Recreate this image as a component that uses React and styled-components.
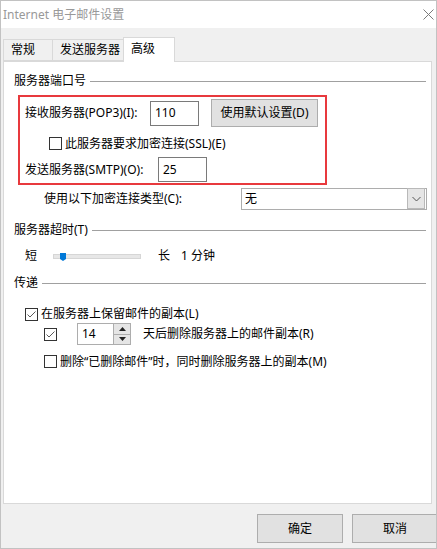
import React from 'react'
import styled, { createGlobalStyle } from 'styled-components'

const GlobalStyle = createGlobalStyle`
  html, body { margin: 0; padding: 0; background: #fff; }
  body {
    font-family: "Noto Sans", "Noto Sans CJK SC", sans-serif;
    font-size: 12px;
    color: #000;
  }
`

const Window = styled.div`
  width: 437px;
  height: 549px;
  box-sizing: border-box;
  border: 1px solid #c2c2c2;
  display: flex;
  flex-direction: column;
  overflow: hidden;
  background: #f0f0f0;
`

const TitleBar = styled.div`
  height: 27px;
  flex: none;
  background: #fff;
  display: flex;
  align-items: center;
  justify-content: space-between;
  padding: 0 2px 0 2px;
  color: #999;
  line-height: 18px;
`

const CloseIcon = () => (
  <svg width="11" height="11" viewBox="0 0 11 11">
    <path d="M0.5 0.5 L10.5 10.5 M10.5 0.5 L0.5 10.5" stroke="#7a7a7a" strokeWidth="1" fill="none" />
  </svg>
)

const Body = styled.div`
  flex: 1;
  display: flex;
  flex-direction: column;
  padding: 9px 4px 0 1px;
`

const TabStrip = styled.div`
  display: flex;
  align-items: flex-end;
  height: 24px;
  padding-left: 1px;
`

const Tab = styled.div`
  box-sizing: border-box;
  width: ${p => p.$w}px;
  height: ${p => (p.$active ? 25 : 22)}px;
  margin-bottom: ${p => (p.$active ? -1 : 0)}px;
  margin-right: -1px;
  padding-left: 7px;
  display: flex;
  align-items: center;
  border: 1px solid #d9d9d9;
  border-bottom: ${p => (p.$active ? 'none' : '1px solid #d9d9d9')};
  background: ${p => (p.$active ? '#fff' : '#f0f0f0')};
  position: relative;
  z-index: ${p => (p.$active ? 1 : 0)};
  line-height: 18px;
  padding-bottom: ${p => (p.$active ? 2 : 0)}px;
`

const Panel = styled.div`
  box-sizing: border-box;
  height: 443px;
  margin-left: 1px;
  border: 1px solid #d9d9d9;
  background: #fff;
  padding: 10px 4px 0 10px;
  display: flex;
  flex-direction: column;
`

const GroupHeader = styled.div`
  display: flex;
  align-items: center;
  height: 18px;
  line-height: 18px;
  margin-top: ${p => p.$top || 0}px;
  gap: 4px;
  &::after {
    content: '';
    flex: 1;
    height: 1px;
    background: #a0a0a0;
    margin-right: 1px;
  }
`

const Highlight = styled.div`
  box-sizing: border-box;
  width: 309px;
  height: 90px;
  margin: 5px 0 0 4px;
  border: 2px solid #e8393d;
  padding: 2px 0 1px 5px;
  display: flex;
  flex-direction: column;
`

const Row = styled.div`
  display: flex;
  align-items: center;
  height: ${p => p.$h || 18}px;
  margin-top: ${p => p.$top || 0}px;
  padding-left: ${p => p.$indent || 0}px;
  line-height: 18px;
  white-space: nowrap;
`

const Label = styled.span`
  width: ${p => p.$w}px;
  flex: none;
`

const TextBox = styled.div`
  box-sizing: border-box;
  width: ${p => p.$w}px;
  height: 25px;
  border: 1px solid #7a7a7a;
  padding-left: 4px;
  display: flex;
  align-items: center;
  line-height: 18px;
`

const Button = styled.div`
  box-sizing: border-box;
  width: ${p => p.$w}px;
  height: ${p => p.$h}px;
  margin-left: ${p => p.$left || 0}px;
  flex: none;
  background: #e1e1e1;
  border: 1px solid #adadad;
  display: flex;
  align-items: center;
  justify-content: center;
  line-height: 18px;
`

const Box = styled.span`
  box-sizing: border-box;
  width: 13px;
  height: 13px;
  flex: none;
  border: 1px solid #333;
  background: #fff;
  margin-right: ${p => p.$gap ?? 3}px;
  display: flex;
  align-items: center;
  justify-content: center;
`

const Check = ({ checked, gap }) => (
  <Box $gap={gap}>
    {checked && (
      <svg width="11" height="11" viewBox="0 0 11 11">
        <path d="M1.5 5.5 L4 8 L9.5 2.5" stroke="#5a5a5a" strokeWidth="1" fill="none" />
      </svg>
    )}
  </Box>
)

const Select = styled.div`
  box-sizing: border-box;
  width: 186px;
  height: 22px;
  border: 1px solid #adadad;
  display: flex;
  align-items: stretch;
  padding-left: 3px;
  line-height: 18px;
`

const SelectValue = styled.span`
  flex: 1;
  display: flex;
  align-items: center;
`

const DropButton = styled.span`
  box-sizing: border-box;
  width: 18px;
  margin: -1px 1px 0 0;
  background: #e6e6e6;
  border: 1px solid #b9b9b9;
  display: flex;
  align-items: center;
  justify-content: center;
`

const Chevron = () => (
  <svg width="9" height="6" viewBox="0 0 9 6">
    <path d="M0.5 1 L4.5 5 L8.5 1" stroke="#555" strokeWidth="1" fill="none" />
  </svg>
)

const Track = styled.div`
  box-sizing: border-box;
  position: relative;
  width: 88px;
  height: 5px;
  margin: 0 17px 0 16px;
  background: #e7e7e7;
  border: 1px solid #d6d6d6;
`

const Thumb = styled.svg`
  position: absolute;
  left: 6px;
  top: -2px;
`

const Spin = styled.div`
  box-sizing: border-box;
  width: 54px;
  height: 22px;
  margin: 0 12px 0 20px;
  border: 1px solid #adadad;
  display: flex;
  align-items: stretch;
`

const SpinValue = styled.span`
  flex: 1;
  padding-left: 4px;
  display: flex;
  align-items: center;
`

const SpinButtons = styled.span`
  width: 16px;
  display: flex;
  flex-direction: column;
  border-left: 1px solid #adadad;
`

const SpinHalf = styled.span`
  flex: 1;
  background: #e5e5e5;
  display: flex;
  align-items: center;
  justify-content: center;
  & + & { border-top: 1px solid #adadad; }
`

const Arrow = ({ up }) => (
  <svg width="7" height="4" viewBox="0 0 7 4">
    <path d={up ? 'M0 4 L3.5 0 L7 4 Z' : 'M0 0 L3.5 4 L7 0 Z'} fill="#222" />
  </svg>
)

const Footer = styled.div`
  display: flex;
  justify-content: flex-end;
  gap: 9px;
  padding-top: 10px;
  margin-right: -6px;
`

export default function App() {
  return (
    <>
      <GlobalStyle />
      <Window>
        <TitleBar>
          <span>Internet 电子邮件设置</span>
          <CloseIcon />
        </TitleBar>
        <Body>
          <TabStrip>
            <Tab $w={50}>常规</Tab>
            <Tab $w={72}>发送服务器</Tab>
            <Tab $w={52} $active>高级</Tab>
          </TabStrip>
          <Panel>
            <GroupHeader>服务器端口号</GroupHeader>
            <Highlight>
              <Row $h={28}>
                <Label $w={125}>接收服务器(POP3)(I):</Label>
                <TextBox $w={49}>110</TextBox>
                <Button $w={107} $h={28} $left={12}>使用默认设置(D)</Button>
              </Row>
              <Row $h={19} $top={7} $indent={24}>
                <Check />
                此服务器要求加密连接(SSL)(E)
              </Row>
              <Row $h={25} $top={4}>
                <Label $w={133}>发送服务器(SMTP)(O):</Label>
                <TextBox $w={49}>25</TextBox>
              </Row>
            </Highlight>
            <Row $h={22} $top={3} $indent={30}>
              <Label $w={197}>使用以下加密连接类型(C):</Label>
              <Select>
                <SelectValue>无</SelectValue>
                <DropButton><Chevron /></DropButton>
              </Select>
            </Row>

            <GroupHeader $top={11}>服务器超时(T)</GroupHeader>
            <Row $top={8} $indent={11}>
              短
              <Track>
                <Thumb width="6" height="8" viewBox="0 0 6 8">
                  <path d="M0 0 H6 V6 L3 8 L0 6 Z" fill="#0078d7" />
                </Thumb>
              </Track>
              长
              <Label $w={11} />
              1 分钟
            </Row>

            <GroupHeader $top={9}>传递</GroupHeader>
            <Row $top={13} $indent={11}>
              <Check checked />
              在服务器上保留邮件的副本(L)
            </Row>
            <Row $h={22} $indent={30}>
              <Check checked gap={0} />
              <Spin>
                <SpinValue>14</SpinValue>
                <SpinButtons>
                  <SpinHalf><Arrow up /></SpinHalf>
                  <SpinHalf><Arrow /></SpinHalf>
                </SpinButtons>
              </Spin>
              天后删除服务器上的邮件副本(R)
            </Row>
            <Row $h={19} $top={7} $indent={30}>
              <Check />
              删除“已删除邮件”时，同时删除服务器上的副本(M)
            </Row>
          </Panel>
          <Footer>
            <Button $w={86} $h={29}>确定</Button>
            <Button $w={86} $h={29}>取消</Button>
          </Footer>
        </Body>
      </Window>
    </>
  )
}
